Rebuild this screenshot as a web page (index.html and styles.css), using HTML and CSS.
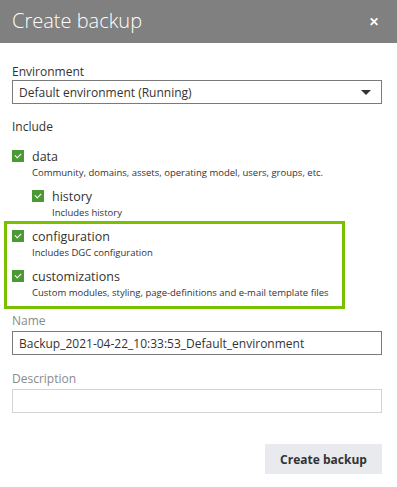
FILE: index.html
```html
<!DOCTYPE html>
<html lang="en">

<head>
    <meta charset="UTF-8">
    <meta name="viewport" content="width=device-width, initial-scale=1.0">
    <title>Create backup</title>
    <link rel="stylesheet" href="styles.css">
</head>

<body>
    <div class="modal">
        <div class="modal-header">
            <h1>Create backup</h1>
            <span class="close">&#x2715;</span>
        </div>

        <div class="modal-body">
            <div class="field">
                <label class="field-label dark">Environment</label>
                <div class="select">
                    <span>Default environment (Running)</span>
                    <span class="caret"></span>
                </div>
            </div>

            <p class="section-title">Include</p>

            <div class="option first">
                <span class="check"></span>
                <div class="option-text">
                    <p class="option-name">data</p>
                    <p class="option-desc">Community, domains, assets, operating model, users, groups, etc.</p>
                </div>
            </div>

            <div class="option sub">
                <span class="check"></span>
                <div class="option-text">
                    <p class="option-name">history</p>
                    <p class="option-desc">Includes history</p>
                </div>
            </div>

            <div class="highlight">
                <div class="option">
                    <span class="check"></span>
                    <div class="option-text">
                        <p class="option-name">configuration</p>
                        <p class="option-desc">Includes DGC configuration</p>
                    </div>
                </div>
                <div class="option">
                    <span class="check"></span>
                    <div class="option-text">
                        <p class="option-name">customizations</p>
                        <p class="option-desc">Custom modules, styling, page-definitions and e-mail template files</p>
                    </div>
                </div>
            </div>

            <div class="field name-field">
                <label class="field-label">Name</label>
                <div class="input">Backup_2021-04-22_10:33:53_Default_environment</div>
            </div>

            <div class="field desc-field">
                <label class="field-label">Description</label>
                <div class="input light"></div>
            </div>

            <div class="actions">
                <button type="button" class="btn">Create backup</button>
            </div>
        </div>
    </div>
</body>

</html>
```

FILE: styles.css
```css
* {
    padding: 0;
    margin: 0;
    box-sizing: border-box;
    font-family: 'Open Sans', 'Liberation Sans', sans-serif;
}

body {
    background-color: #ffffff;
    color: #333333;
}

.modal {
    width: 397px;
    height: 487px;
}

.modal-header {
    height: 43px;
    background-color: #808080;
    display: flex;
    align-items: center;
    justify-content: space-between;
    padding: 0 18px 0 12px;
}

h1 {
    font-size: 20px;
    font-weight: 300;
    color: #ffffff;
    line-height: 1;
    margin-top: -1px;
}

.close {
    color: #ffffff;
    font-size: 12px;
    font-weight: bold;
}

.modal-body {
    padding: 21px 15px 0 12px;
}

.field {
    display: flex;
    flex-direction: column;
}

.field-label {
    font-size: 12px;
    line-height: 16px;
    color: #8a8a8a;
}

.field-label.dark {
    color: #333333;
}

.select,
.input {
    height: 24px;
    border: 1px solid #7a7a7a;
    display: flex;
    align-items: center;
    justify-content: space-between;
    padding: 0 10px 0 6px;
    font-size: 12px;
    color: #333333;
}

.input.light {
    border-color: #d4d4d4;
}

.caret {
    width: 0;
    height: 0;
    border-left: 5px solid transparent;
    border-right: 5px solid transparent;
    border-top: 5px solid #333333;
}

.section-title {
    font-size: 12px;
    margin-top: 15px;
    line-height: 16px;
}

.option {
    display: flex;
    gap: 8px;
    margin-top: 9px;
}

.option.first {
    margin-top: 13px;
}

.option.sub {
    margin-left: 20px;
}

.check {
    width: 12px;
    height: 12px;
    margin-top: 2px;
    background-color: #4b9933;
    position: relative;
    flex-shrink: 0;
}

.check::after {
    content: "";
    position: absolute;
    left: 3.5px;
    top: 2px;
    width: 3px;
    height: 5px;
    border-right: 1.5px solid #ffffff;
    border-bottom: 1.5px solid #ffffff;
    transform: rotate(45deg);
}

.option-name {
    font-size: 12.5px;
    line-height: 18px;
}

.option-desc {
    font-size: 9.5px;
    line-height: 13px;
}

.highlight {
    margin: 2px 37px 0 -8px;
    border: 3px solid #78c000;
    padding: 0 5px 7px 5px;
}

.highlight .option:first-child {
    margin-top: 4px;
}

.name-field {
    margin-top: 4px;
}

.desc-field {
    margin-top: 16px;
}

.name-field .field-label,
.desc-field .field-label {
    margin-bottom: 2px;
}

.actions {
    display: flex;
    justify-content: flex-end;
    margin-top: 31px;
}

.btn {
    width: 117px;
    height: 30px;
    border: none;
    background-color: #e8eaed;
    color: #333333;
    font-weight: bold;
    font-size: 12px;
}
```
